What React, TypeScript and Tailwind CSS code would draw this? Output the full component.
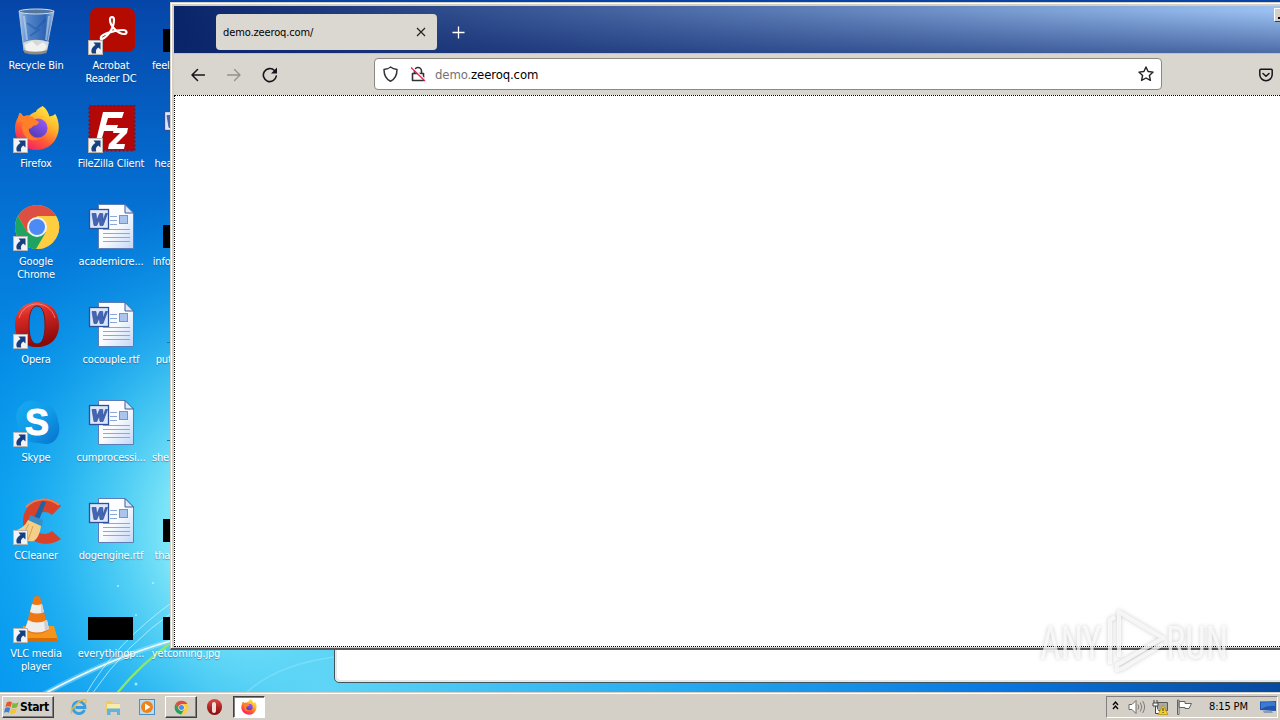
import type { ReactNode } from "react";

function Shortcut() {
    return (
        <svg className="absolute left-0 bottom-0" width="15" height="15" viewBox="0 0 15 15">
            <rect x=".5" y=".5" width="14" height="14" fill="#f1f3f7" stroke="#b9b4ae" />
            <path d="M5.500 2.500h7V9.500L10.300 7.500C8 9 7.500 10.500 8.200 13.500H4C2.500 10 4 7 7.500 5z" fill="#173f80" />
        </svg>
    );
}

function RecycleBin() {
    return (
        <svg width="48" height="48" viewBox="0 0 48 48">
            <defs>
                <linearGradient id="bin" x1="0" x2="1">
                    <stop offset="0" stopColor="#a9c9ec" />
                    <stop offset=".25" stopColor="#5587c8" />
                    <stop offset=".75" stopColor="#2c63b4" />
                    <stop offset="1" stopColor="#a5c4e8" />
                </linearGradient>
            </defs>
            <path d="M6 4 11 44q12 5 22 0L41 4z" fill="url(#bin)" stroke="#a5bdd8" />
            <path d="M10 36q11-6 26-1l-2 9q-11 4-22 0z" fill="#d5d8d8" />
            <path d="m12 38 7-4 5 5 6-4 4 4-3 5H13z" fill="#f1f1ef" />
            <path d="M11 43q11 4 23 0l-.5 3q-11 3-22 0z" fill="#8e8c7e" />
            <ellipse cx="23.500" cy="4.500" rx="17.500" ry="2.500" fill="#53779f" stroke="#d6dcdf" />
            <path d="m11 9 3 24M36 9l-3 24" stroke="#d4e5f7" strokeOpacity=".5" strokeWidth="2" />
            <path d="m14 16 9 6 10-10M17 29l10-7" stroke="#1e55a6" strokeOpacity=".5" strokeWidth="2" fill="none" />
        </svg>
    );
}

function Acrobat() {
    return (
        <svg width="48" height="48" viewBox="0 0 48 48">
            <rect x="2" y="1" width="45" height="44" rx="7" fill="#b30b00" />
            <path d="M14 32c5-2 12-10 12-19 0-4-4-4-4 0 0 6 8 14 14 14 4 0 3-4-1-4-7 0-21 4-22 7-.5 2 0 2.500 1 2" fill="none" stroke="#fff" strokeWidth="2.200" strokeLinejoin="round" />
        </svg>
    );
}

function Firefox({ size = 48 }: { size?: number }) {
    return (
        <svg width={size} height={size} viewBox="0 0 48 48">
            <defs>
                <linearGradient id="fxBody" x1=".8" y1="0" x2=".2" y2="1">
                    <stop offset="0" stopColor="#fff14a" />
                    <stop offset=".35" stopColor="#ffb42a" />
                    <stop offset=".65" stopColor="#ff5a36" />
                    <stop offset="1" stopColor="#f2156e" />
                </linearGradient>
                <linearGradient id="fxGlobe" x1=".8" y1="0" x2=".2" y2="1">
                    <stop offset="0" stopColor="#9d59fb" />
                    <stop offset="1" stopColor="#4a3cb3" />
                </linearGradient>
            </defs>
            <path d="M30 1c4 3 6 7 7 11 3-1 5-1 6-3 4 7 5 16 2 23-3 9-12 15-21 15C11 47 1 37 1 25c0-6 2-11 4-13l1-4c2 1 3 3 4 4 2-1 4-1 6-1 3-3 5-3 7-4 0-2 3-4 7-6z" fill="url(#fxBody)" />
            <circle cx="25" cy="24" r="10" fill="url(#fxGlobe)" />
            <path d="M6 8c2 1 3 3 4 4 2-1 4-1 7 0 3 0 4 2 6 4 1 1 3 1 3 2-1 3-4 3-6 4-1 1-2 3-5 3 1 8 8 12 14 9-7 6-18 2-20-7-1-6 0-9 2-12-3 0-5 1-7 4 0-5 0-8 2-11z" fill="#ff7f2b" />
        </svg>
    );
}

function FileZilla() {
    return (
        <svg width="48" height="48" viewBox="0 0 48 48">
            <rect x="1.500" y=".5" width="45" height="45" fill="#b40808" stroke="#8f0b15" strokeWidth="2" strokeDasharray="2 2" />
            <path d="M15 7h21l-2 6H20l-2 7h12l-2 6H16l-4 14H7z" fill="#fff" />
            <path d="M26 23h14l-1 5-11 11h9l-1 5H20l1-5 11-11h-7z" fill="#fff" />
        </svg>
    );
}

function Chrome({ size = 48 }: { size?: number }) {
    return (
        <svg width={size} height={size} viewBox="0 0 48 48">
            <circle cx="24" cy="24" r="22" fill="#ffcd40" />
            <path d="M5 13A22 22 0 0 1 43 13H24L14 29z" fill="#dd4f43" />
            <path d="M43.500 13.500H24v10l9 6-10 16.500A22 22 0 0 0 43.500 13.500z" fill="#ffcd40" />
            <path d="M5 13A22 22 0 0 0 23 46L33 29 24 34 14 29z" fill="#1da362" />
            <circle cx="24" cy="24" r="10" fill="#f1f1f1" />
            <circle cx="24" cy="24" r="8" fill="#4c8bf5" />
        </svg>
    );
}

function Opera({ size = 48 }: { size?: number }) {
    return (
        <svg width={size} height={size} viewBox="0 0 48 48">
            <defs>
                <linearGradient id="opera" x1="0" x2=".3" y1="0" y2="1">
                    <stop offset="0" stopColor="#f4645a" />
                    <stop offset=".35" stopColor="#d92a25" />
                    <stop offset="1" stopColor="#8d0a0a" />
                </linearGradient>
            </defs>
            <path fillRule="evenodd" d="M24 1c13 0 22 9 22 23s-9 22-22 22S2 38 2 24 11 1 24 1zm0 4c-6 0-8 9-8 19s2 19 8 19 8-9 8-19-2-19-8-19z" fill="url(#opera)" />
            <path d="M24 5c-6 0-8 9-8 19s2 19 8 19 8-9 8-19-2-19-8-19z" fill="none" stroke="#7c1717" />
            <path d="M6 17C9 7 17 3 24 3s15 4 18 14" fill="none" stroke="#ffaba2" strokeOpacity=".6" />
        </svg>
    );
}

function Skype() {
    return (
        <svg width="48" height="48" viewBox="0 0 48 48">
            <defs>
                <linearGradient id="skype" x1="0" x2="1" y1="0" y2="1">
                    <stop offset="0" stopColor="#16a9ef" />
                    <stop offset=".5" stopColor="#119be8" />
                    <stop offset="1" stopColor="#0672cc" />
                </linearGradient>
            </defs>
            <path d="M15 2c4-1 7 0 9 1 12 0 20 7 21 19 4 10-1 23-12 23-4 0-6-1-8-1C11 44 4 34 4 23 1 15 6 4 15 2z" fill="url(#skype)" />
            <text x="24" y="36" textAnchor="middle" fontSize="36" className="font-['Liberation_Sans',sans-serif] font-bold" fill="#fff" stroke="#fff">S</text>
        </svg>
    );
}

function CCleaner() {
    return (
        <svg width="48" height="48" viewBox="0 0 48 48">
            <path d="m48 9-9 9c-6-6-17-3-18 7s10 16 18 9l9 8C35 52 11 46 10 26 9 3 35-6 48 9z" fill="#d8412a" />
            <path d="M13 10C22 1 36 0 46 8" stroke="#f47d52" strokeWidth="2" fill="none" />
            <path d="m29 4 4 1-7 18-5-2z" fill="#1d63a5" />
            <path d="m17 18 13 5-1 6-14-5z" fill="#3c8fc6" />
            <path d="m15 23 13 6c-1 8-4 13-7 15-8 1-17-2-20-10 7-2 11-5 14-11z" fill="#f5cf88" />
            <path d="m16 27-7 12m11-10-5 14" stroke="#d9a24f" fill="none" />
        </svg>
    );
}

function Vlc() {
    return (
        <svg width="48" height="48" viewBox="0 0 48 48">
            <path d="M10 31h31l4 14H7z" fill="#f5951c" />
            <path d="M7 43h37l1 3H7z" fill="#d96c05" />
            <path d="M21 2q3-2 6 0l9 33q-12 8-24 0z" fill="#ee7813" />
            <path d="m19 9-2 8q7 3 14 0l-2-8q-5 2-10 0zM15 25l-3 9q12 7 24 0l-2-9q-10 5-19 0z" fill="#eee" />
            <path d="M28 9.500l1 .5 2 7-3 1zM31 26.500l3-1 2 8.500-4 2z" fill="#cfcfd2" />
        </svg>
    );
}

function WordDoc() {
    return (
        <svg width="48" height="48" viewBox="0 -1 48 48">
            <defs>
                <linearGradient id="page" x1="0" x2="1" y1="0" y2="1">
                    <stop offset="0" stopColor="#fff" />
                    <stop offset=".5" stopColor="#fafcff" />
                    <stop offset="1" stopColor="#c3d6f6" />
                </linearGradient>
            </defs>
            <path d="M10.500.5H37l8.500 8.500v35.500h-35z" fill="url(#page)" stroke="#5c7db8" />
            <path d="M37 .5V9h8.500z" fill="#dce8fb" stroke="#3c5c99" />
            <path d="M22 12.500h7m-7 4h7m-7 4h7m-14 5h27m-27 4h27m-27 4h27m-27 4h27" stroke="#8aa8d8" />
            <rect x="31.500" y="11.500" width="8" height="8" fill="#a9c5ee" stroke="#7295ce" />
            <rect x="1.500" y="5.500" width="19" height="19" fill="#dbe6fa" stroke="#2c4f9e" strokeWidth="1.300" />
            <path d="M4 9.500h4l.7 7 3-7h3l.5 7 2.300-7h2L15 21.500h-3l-.7-6-2.500 6H6z" fill="#4566b4" stroke="#2f4f98" strokeWidth=".7" />
        </svg>
    );
}

function BlackThumb() {
    return <div className="w-[45px] h-[23px] bg-black mt-[22px] mr-[2px]" />;
}

function DarkLine() {
    return <div className="w-[40px] h-px bg-[#18799a] mt-[41px]" />;
}

type Item = { label: string; icon: ReactNode; shortcut?: boolean };

const columns: Item[][] = [
    [
        { label: "Recycle Bin", icon: <RecycleBin /> },
        { label: "Firefox", icon: <Firefox size={46} />, shortcut: true },
        { label: "Google Chrome", icon: <Chrome />, shortcut: true },
        { label: "Opera", icon: <Opera />, shortcut: true },
        { label: "Skype", icon: <Skype />, shortcut: true },
        { label: "CCleaner", icon: <CCleaner />, shortcut: true },
        { label: "VLC media player", icon: <Vlc />, shortcut: true },
    ],
    [
        { label: "Acrobat Reader DC", icon: <Acrobat />, shortcut: true },
        { label: "FileZilla Client", icon: <FileZilla />, shortcut: true },
        { label: "academicre...", icon: <WordDoc /> },
        { label: "cocouple.rtf", icon: <WordDoc /> },
        { label: "cumprocessi...", icon: <WordDoc /> },
        { label: "dogengine.rtf", icon: <WordDoc /> },
        { label: "everythingp...", icon: <BlackThumb /> },
    ],
    [
        { label: "feelingcamp...", icon: <BlackThumb /> },
        { label: "headersjuly...", icon: <WordDoc /> },
        { label: "informationf...", icon: <BlackThumb /> },
        { label: "puttings.png", icon: <DarkLine /> },
        { label: "sheanimalre...", icon: <DarkLine /> },
        { label: "thatpointsc...", icon: <BlackThumb /> },
        { label: "yetcoming.jpg", icon: <BlackThumb /> },
    ],
];

function DesktopItem({ label, icon, shortcut }: Item) {
    const breaks = label.split(" ").length > 2 || label === "Google Chrome";
    return (
        <div className="w-[75px] h-[98px] flex flex-col items-center">
            <div className="relative w-[48px] h-[48px] ml-[2px] flex justify-center shrink-0">
                {icon}
                {shortcut && <Shortcut />}
            </div>
            <p
                className={`mt-[4px] ml-px text-center text-[11px] leading-[13px] tracking-[-0.18px] text-white [text-shadow:0_1px_1px_rgba(0,40,90,0.4)] ${
                    breaks ? "w-[64px]" : "whitespace-nowrap"
                }`}
            >
                {label}
            </p>
        </div>
    );
}

function Wallpaper() {
    return (
        <svg className="absolute inset-0" width="1280" height="720" viewBox="0 0 1280 720">
            <defs>
                <linearGradient id="sky" x1="0" y1="0" x2="0" y2="1">
                    <stop offset="0" stopColor="#0645a8" />
                    <stop offset=".22" stopColor="#0468cc" />
                    <stop offset=".45" stopColor="#0585e2" />
                    <stop offset=".7" stopColor="#049bef" />
                    <stop offset="1" stopColor="#0696f0" />
                </linearGradient>
                <radialGradient id="glow" gradientUnits="userSpaceOnUse" cx="280" cy="530" r="350">
                    <stop offset="0" stopColor="#a5f2fb" />
                    <stop offset=".33" stopColor="#82e8f8" stopOpacity=".95" />
                    <stop offset=".55" stopColor="#4fd2f5" stopOpacity=".7" />
                    <stop offset=".78" stopColor="#22b4f2" stopOpacity=".35" />
                    <stop offset="1" stopColor="#08a2ee" stopOpacity="0" />
                </radialGradient>
                <linearGradient id="floor">
                    <stop offset="0" stopColor="#55d2f6" stopOpacity="0" />
                    <stop offset=".14" stopColor="#5ed5f6" />
                    <stop offset=".45" stopColor="#27acf0" />
                    <stop offset=".75" stopColor="#0877e0" />
                    <stop offset="1" stopColor="#0749a0" />
                </linearGradient>
            </defs>
            <rect width="1280" height="720" fill="url(#sky)" />
            <rect width="640" height="720" fill="url(#glow)" />
            <rect x="170" y="648" width="1110" height="46" fill="url(#floor)" />
            <g fill="none" strokeLinecap="round">
                <path d="M44 694Q110 658 174 640" stroke="#b9f1fc" strokeWidth="5" strokeOpacity=".4" />
                <path d="M44 694Q110 658 174 640" stroke="#effdff" strokeWidth="1.800" />
                <path d="M86 694Q115 643 174 601M92 694Q125 645 174 611" stroke="#c6f6fd" strokeOpacity=".75" />
                <path d="M118 692Q142 663 172 642" stroke="#8be868" strokeWidth="2.200" />
                <path d="M245 694Q275 665 334 657" stroke="#a8effb" strokeWidth="1.500" strokeOpacity=".35" />
            </g>
            <g fill="#d9fbff" fillOpacity=".7">
                <circle cx="118" cy="586" r="1" />
                <circle cx="153" cy="583" r="1" />
                <circle cx="136" cy="684" r="1.500" />
                <circle cx="136" cy="615" r="1" />
            </g>
        </svg>
    );
}

function TitleBar() {
    return (
        <div className="h-[47px] shrink-0 flex items-start bg-[linear-gradient(to_bottom,rgba(10,36,106,0)_10%,rgba(10,36,106,0.55)),linear-gradient(to_right,#0a246a,#9cc2f2)]">
            <div className="mt-[8px] ml-[42px] w-[221px] h-[36px] rounded-[4px] bg-[#dbd8d2] flex items-center justify-between pl-[7px] pr-[11px]">
                <span className="mt-[3px] text-[11px] text-black tracking-[-0.12px]">demo.zeeroq.com/</span>
                <svg width="10" height="10" viewBox="0 0 10 10">
                    <path d="m1 1 8 8m0-8-8 8" stroke="#222" strokeWidth="1.200" />
                </svg>
            </div>
            <svg className="mt-[20px] ml-[15px]" width="13" height="13" viewBox="0 0 13 13">
                <path d="M6.500 .5v12M.5 6.500h12" stroke="#fff" strokeWidth="1.300" />
            </svg>
            <div className="ml-auto mt-[2px] w-[6px] h-[14px] bg-[#d4d0c8] border-t border-l border-white border-b border-b-[#404040] flex items-end justify-end pb-[2px]">
                <div className="w-[2px] h-[2px] bg-black" />
            </div>
        </div>
    );
}

function Toolbar() {
    return (
        <div className="h-[42px] shrink-0 flex items-center bg-[#d9d6cf] border-t border-[#c5c2bc] pl-[17px] pb-px">
            <svg className="mt-px" width="14" height="14" viewBox="0 0 14 14" fill="none" stroke="#15141a" strokeWidth="1.500" strokeLinecap="round" strokeLinejoin="round">
                <path d="M13.500 7H1m5.500-5.500L1 7l5.500 5.500" />
            </svg>
            <svg className="mt-px ml-[22px]" width="14" height="14" viewBox="0 0 14 14" fill="none" stroke="#93918d" strokeWidth="1.300" strokeLinecap="round" strokeLinejoin="round">
                <path d="M.5 7H13M7.500 1.500 13 7l-5.500 5.500" />
            </svg>
            <svg className="mt-px ml-[21px]" width="16" height="16" viewBox="0 0 16 16" fill="none" stroke="#15141a" strokeWidth="1.600" strokeLinecap="round">
                <path d="M14.300 9A6.500 6.500 0 1 1 12.500 3.500" />
                <path d="M15 .5v6H9z" fill="#15141a" stroke="none" />
            </svg>
            <div className="ml-[96px] w-[788px] h-[32px] bg-white border border-[#8c8880] rounded-[4px] flex items-center pl-[8px] pr-[7px]">
                <svg width="15" height="16" viewBox="0 0 15 16" fill="none" stroke="#333238" strokeWidth="1.500" strokeLinejoin="round">
                    <path d="M7.500 1Q10 3 14 3.500C14 9 12.500 13 7.500 15.200 2.500 13 1 9 1 3.500 5 3 5 3 7.500 1z" />
                </svg>
                <svg className="ml-[12px]" width="16" height="16" viewBox="0 0 16 16" fill="none">
                    <path d="M4.500 7V5a3.500 3.500 0 0 1 7 0v2M2.500 7.500h11v7h-11z" stroke="#333238" strokeWidth="1.600" strokeLinejoin="round" />
                    <path d="m2.500 1.500 13 12.500" stroke="#fff" strokeWidth="1.500" />
                    <path d="m1 1.500 14 13.500" stroke="#e22850" strokeWidth="1.300" />
                </svg>
                <p className="mt-px ml-[9px] text-[13px] leading-4 text-black tracking-[-0.12px]">
                    <span className="text-[#737278]">demo.</span>zeeroq.com
                </p>
                <svg className="ml-auto" width="16" height="16" viewBox="0 0 16 16" fill="none" stroke="#222" strokeWidth="1.400" strokeLinejoin="round">
                    <path d="m8 1 2.100 4.500 5 .6-3.700 3.400 1 4.900L8 12l-4.400 2.400 1-4.900L.9 6.100l5-.6z" />
                </svg>
            </div>
            <svg className="mt-px ml-[97px]" width="14" height="14" viewBox="0 0 14 14" fill="none" stroke="#15141a" strokeWidth="1.500" strokeLinecap="round" strokeLinejoin="round">
                <path d="M1.800 1.300h10.400q1 0 1 1V6.500a6.200 6.200 0 0 1-12.400 0V2.300q0-1 1-1z" />
                <path d="M4 5.500 7 8.300l3-2.800" />
            </svg>
        </div>
    );
}

function Browser() {
    return (
        <div className="absolute left-[170px] top-[2px] w-[1110px] h-[648px] flex flex-col bg-[#d4d0c8] border-t border-l border-[#d4d0c8] border-b-2 border-b-[#5a5856]">
            <div className="flex-1 flex flex-col border-t border-l border-white pt-[2px] pl-[2px] pb-px">
                <TitleBar />
                <Toolbar />
                <div className="flex-1 bg-white border border-r-0 border-dotted border-black" />
            </div>
        </div>
    );
}

function Watermark() {
    return (
        <svg className="absolute left-[1034px] top-[598px]" width="210" height="84" viewBox="0 -6 210 84">
            <g className="font-['Roboto',sans-serif] [filter:drop-shadow(0_0_2px_rgba(0,0,0,0.28))]" fill="#fff" fillOpacity=".72">
                <text transform="translate(6 55) scale(.78 1)" fontSize="46">ANY</text>
                <text transform="translate(132 55) scale(.79 1)" fontSize="46">RUN</text>
                <g fill="none" stroke="#fff" strokeWidth="4" strokeOpacity=".72" strokeLinejoin="round">
                    <path d="M85 53V8l44 26-46 27v5l6-2 40-24" />
                    <path d="M76 60V16l5-3" />
                </g>
            </g>
        </svg>
    );
}

function Taskbar() {
    return (
        <div className="absolute left-0 bottom-0 w-full h-[28px] bg-[#d4d0c8] border-t border-[#d4d0c8]">
            <div className="h-full border-t border-white flex items-center pl-[2px] pt-[2px] pb-[2px]">
                <div className="w-[52px] h-[22px] flex items-center border border-white border-r-[#404040] border-b-[#404040] shadow-[inset_-1px_-1px_0_#808080] pl-px">
                    <svg width="16" height="17" viewBox="0 0 17 17">
                        <path d="M3 3q3-2 5.500 0L7 8Q4.500 6.500 1.500 8z" fill="#e8572a" />
                        <path d="M9.300 3.500q3 1.500 6.200-.5l-1.500 5q-3 2-6 .5z" fill="#7cba3c" />
                        <path d="M1.200 9q3-1.500 5.500 0l-1.500 5Q3 12.500 0 14z" fill="#3a83d2" />
                        <path d="M7.500 9.500q3 1.500 6.200-.5l-1.500 5q-3 2-6 .5z" fill="#f7c331" />
                    </svg>
                    <span className="text-[12px] font-bold text-black tracking-[-0.4px]">Start</span>
                </div>
                <svg className="ml-[16px]" width="18" height="18" viewBox="0 0 18 18" fill="none">
                    <path d="M14.500 12A6 6 0 1 1 15 9.500H5.500" stroke="#3a9ede" strokeWidth="2.800" />
                    <path d="M2 15.500C-2 14 9 1 15 1.500c2 .5 1 3 0 4" stroke="#e7b93a" strokeWidth="1.300" />
                </svg>
                <svg className="ml-[17px]" width="17" height="17" viewBox="0 0 17 17">
                    <path d="M1 2h6l1 2h7v9H1z" fill="#eccb62" />
                    <path d="M2 5h13v6H2z" fill="#fbebab" />
                    <path d="M2 16V9.500h13V16h-3v-3H5.500v3z" fill="#63b3dd" />
                </svg>
                <svg className="ml-[17px]" width="16" height="16" viewBox="0 0 16 16">
                    <rect x=".5" y=".5" width="15" height="15" fill="#b9dcf5" stroke="#4b8fc7" />
                    <circle cx="8" cy="8" r="6" fill="#f28216" />
                    <path d="m6 4.500 5.500 3.500L6 11.500z" fill="#fff" />
                </svg>
                <div className="ml-[10px] w-[32px] h-[22px] flex items-center justify-center border border-white border-r-[#404040] border-b-[#404040] shadow-[inset_-1px_-1px_0_#808080]">
                    <Chrome size={15} />
                </div>
                <div className="w-[36px] flex justify-center pr-[2px]">
                    <div className="w-[15px] h-[16px] rounded-full bg-[linear-gradient(#dc4a44,#850808)] flex items-center justify-center">
                        <div className="w-[4px] h-[11px] rounded-[2px] bg-[#f2dddd]" />
                    </div>
                </div>
                <div className="w-[32px] h-[22px] flex items-center justify-center bg-white border border-[#404040] border-r-white border-b-white shadow-[inset_1px_1px_0_#808080]">
                    <Firefox size={16} />
                </div>
                <div className="ml-auto w-[172px] h-[22px] flex items-center border border-[#808080] border-r-white border-b-white mr-[2px]">
                    <svg className="ml-[5px] mb-[3px]" width="7" height="9" viewBox="0 0 7 9" fill="none" stroke="#000" strokeWidth="1.300">
                        <path d="m1 4 2.500-3L6 4M1 8l2.500-3L6 8" />
                    </svg>
                    <svg className="ml-[9px]" width="17" height="16" viewBox="0 0 17 16" fill="none" stroke="#6c6a66">
                        <path d="M1 5.500h3l4-4v13l-4-4H1z" fill="#fff" />
                        <path d="M10 5.500q1.500 2.500 0 5M12.300 3.500q3 4.500 0 9M14.600 2q4 6 0 12" stroke="#7d7b77" />
                    </svg>
                    <svg className="ml-[7px]" width="17" height="16" viewBox="0 0 17 16">
                        <path d="M5.500 3.500h10v8h-10z" fill="#aaa9a4" stroke="#5a5955" />
                        <path d="M2 1v3M5 1v3M1 4h5v3H1zM3.500 7v7.500H8" fill="#fff" stroke="#444" />
                        <path d="m11 6 5 9.500H6z" fill="#f7cf1c" stroke="#b08b0a" strokeWidth=".7" />
                        <path d="M10.500 9h1v3h-1zm0 4h1v1h-1z" fill="#333" />
                    </svg>
                    <svg className="ml-[7px]" width="17" height="16" viewBox="0 0 17 16" fill="#fff" stroke="#666460">
                        <path d="M1.500 1h1.500v14.500H1.500zM3 2.500h6v2h6.500L13 9.500H9v-1H3z" />
                    </svg>
                    <span className="ml-[16px] whitespace-nowrap text-[11px] text-black tracking-[-0.15px]">8:15 PM</span>
                    <svg className="ml-auto mr-px shrink-0" width="16" height="14" viewBox="0 0 16 14">
                        <path d="M0 1.500 16 1v10L0 10z" fill="#1d55b0" />
                        <path d="M1 2.500 15 2v4Q8 5 1 9z" fill="#3d7bd0" />
                        <path d="M3 11h9l1 2H4z" fill="#8f9cb0" />
                    </svg>
                </div>
            </div>
        </div>
    );
}

export default function App() {
    return (
        <div className="relative w-[1280px] h-[720px] overflow-hidden font-['DejaVu_Sans_Condensed','DejaVu_Sans',sans-serif] [font-stretch:condensed]">
            <Wallpaper />
            <div className="relative flex w-[225px] ml-[-2px] pt-[7px]">
                {columns.map((items, i) => (
                    <div key={i} className="w-[75px] shrink-0 flex flex-col">
                        {items.map((item) => (
                            <DesktopItem key={item.label} {...item} />
                        ))}
                    </div>
                ))}
            </div>
            <div className="absolute left-[334px] top-[640px] w-[960px] h-[43px] rounded-b-[5px] bg-white border border-[#42545c] shadow-[inset_2px_-2px_0_#e3e8ea]" />
            <Browser />
            <Watermark />
            <Taskbar />
        </div>
    );
}
